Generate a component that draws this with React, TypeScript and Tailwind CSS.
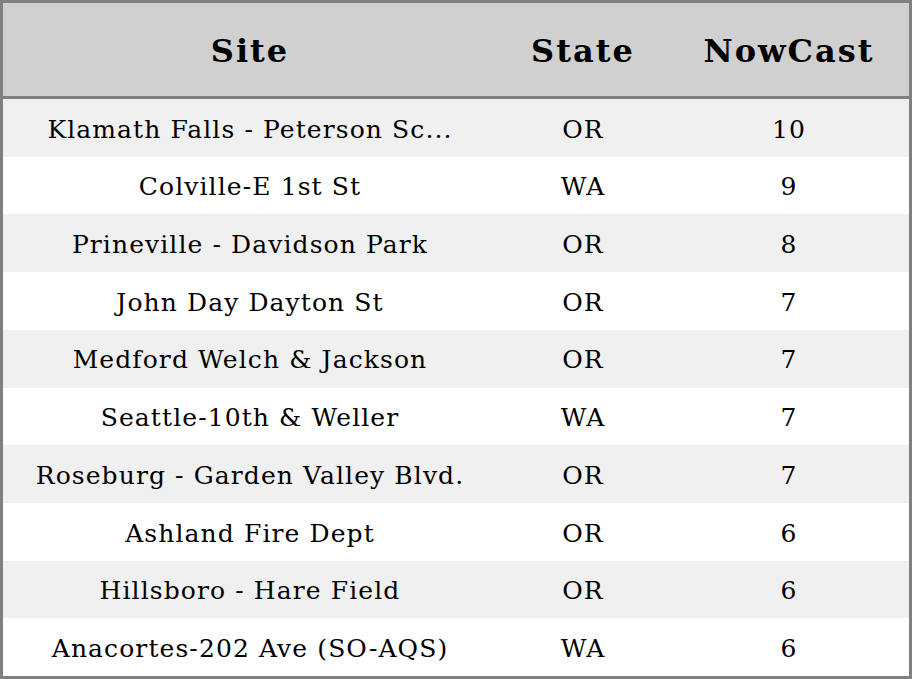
const rows = [
    { site: "Klamath Falls - Peterson Sc...", state: "OR", value: 10 },
    { site: "Colville-E 1st St", state: "WA", value: 9 },
    { site: "Prineville - Davidson Park", state: "OR", value: 8 },
    { site: "John Day Dayton St", state: "OR", value: 7 },
    { site: "Medford Welch & Jackson", state: "OR", value: 7 },
    { site: "Seattle-10th & Weller", state: "WA", value: 7 },
    { site: "Roseburg - Garden Valley Blvd.", state: "OR", value: 7 },
    { site: "Ashland Fire Dept", state: "OR", value: 6 },
    { site: "Hillsboro - Hare Field", state: "OR", value: 6 },
    { site: "Anacortes-202 Ave (SO-AQS)", state: "WA", value: 6 },
];

export default function App() {
    return (
        <div
            className="flex h-[679px] w-[912px] flex-col overflow-hidden border-[3px] border-[#808080] bg-white text-black"
            style={{ fontFamily: '"DejaVu Serif", serif' }}
        >
            <div className="flex h-[96px] shrink-0 items-center border-b-[3px] border-[#808080] bg-[#d0d0d0] pt-[2px] text-[32px] font-bold tracking-[2px]">
                <div className="w-[494px] text-center">Site</div>
                <div className="w-[172px] text-center">State</div>
                <div className="flex-1 text-center">NowCast</div>
            </div>
            {rows.map((row, i) => (
                <div
                    key={row.site}
                    className={`flex flex-1 items-center pt-[3px] text-[25px] tracking-[1.1px] ${i % 2 === 0 ? "bg-[#f0f0f0]" : "bg-white"}`}
                >
                    <div className="w-[494px] whitespace-nowrap text-center">{row.site}</div>
                    <div className="w-[172px] text-center">{row.state}</div>
                    <div className="flex-1 text-center">{row.value}</div>
                </div>
            ))}
        </div>
    );
}
